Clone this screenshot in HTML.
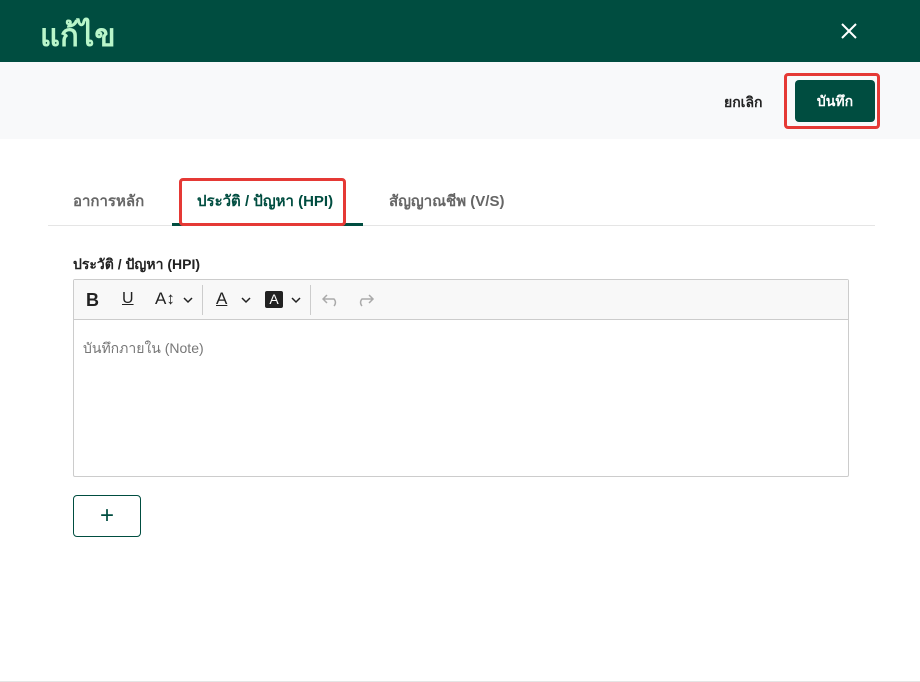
<!DOCTYPE html>
<html><head><meta charset="utf-8"><style>
*{box-sizing:border-box;margin:0;padding:0}
body{width:920px;height:682px;position:relative;background:#fff;font-family:"Liberation Sans","Noto Sans CJK SC",sans-serif;overflow:hidden}
.a{position:absolute}
</style></head><body>
<div class="a" style="left:0;top:0;width:920px;height:62px;background:#004d40"></div>
<div class="a" style="left:40px;top:13px;font-size:31px;color:#b9f6ca;font-weight:bold;font-family:'Noto Sans CJK SC',sans-serif;line-height:40px">แก้ไข</div>
<svg class="a" style="left:840px;top:22px" width="18" height="18" viewBox="0 0 18 18"><path d="M2 2L16 16M16 2L2 16" stroke="#fff" stroke-width="2"/></svg>
<div class="a" style="left:0;top:62px;width:920px;height:77px;background:#f8f9fa"></div>
<div class="a" style="left:724px;top:92px;font-size:14px;color:#222;font-weight:bold">ยกเลิก</div>
<div class="a" style="left:784px;top:73px;width:96px;height:56px;border:3px solid #e53935;border-radius:4px"></div>
<div class="a" style="left:795px;top:80px;width:80px;height:42px;background:#004d40;border-radius:4px;color:#fff;font-size:14px;font-weight:bold;text-align:center;line-height:42px">บันทึก</div>
<div class="a" style="left:73px;top:189px;font-size:15px;color:#666;font-weight:bold">อาการหลัก</div>
<div class="a" style="left:197px;top:189px;font-size:15px;color:#004d40;font-weight:bold">ประวัติ / ปัญหา (HPI)</div>
<div class="a" style="left:389px;top:189px;font-size:15px;color:#666;font-weight:bold">สัญญาณชีพ (V/S)</div>
<div class="a" style="left:48px;top:225px;width:827px;height:1px;background:#e5e5e5"></div>
<div class="a" style="left:172px;top:223px;width:191px;height:3px;background:#004d40"></div>
<div class="a" style="left:179px;top:178px;width:167px;height:48px;border:3px solid #e53935;border-radius:4px"></div>
<div class="a" style="left:73px;top:254px;font-size:14px;color:#222;font-weight:bold">ประวัติ / ปัญหา (HPI)</div>
<div class="a" style="left:73px;top:279px;width:776px;height:198px;border:1px solid #ccc;border-radius:2px"></div>
<div class="a" style="left:74px;top:280px;width:774px;height:40px;background:#f8f8f8;border-bottom:1px solid #ccc"></div>
<div class="a" style="left:86px;top:290px;font-size:18px;font-weight:bold;color:#222">B</div>
<div class="a" style="left:122px;top:290px;font-size:16px;color:#222;text-decoration:underline">U</div>
<div class="a" style="left:155px;top:289px;font-size:17px;color:#222">A↕</div>
<svg class="a" style="left:183px;top:296px" width="10" height="8" viewBox="0 0 10 8"><path d="M1 2L5 6L9 2" fill="none" stroke="#222" stroke-width="1.5"/></svg>
<div class="a" style="left:202px;top:285px;width:1px;height:30px;background:#ccc"></div>
<div class="a" style="left:216px;top:289px;font-size:17px;color:#222;text-decoration:underline">A</div>
<svg class="a" style="left:241px;top:296px" width="10" height="8" viewBox="0 0 10 8"><path d="M1 2L5 6L9 2" fill="none" stroke="#222" stroke-width="1.5"/></svg>
<div class="a" style="left:265px;top:291px;width:18px;height:17px;background:#222;color:#fff;font-size:14px;text-align:center;line-height:17px;border-radius:2px">A</div>
<svg class="a" style="left:291px;top:296px" width="10" height="8" viewBox="0 0 10 8"><path d="M1 2L5 6L9 2" fill="none" stroke="#222" stroke-width="1.5"/></svg>
<div class="a" style="left:310px;top:285px;width:1px;height:30px;background:#ccc"></div>
<svg class="a" style="left:322px;top:292px" width="56" height="16" viewBox="0 0 56 16"><path d="M5 3L1 7L5 11M1 7H12A5 5 0 0 1 12 14" fill="none" stroke="#aaa" stroke-width="1.5"/><path d="M51 3L55 7L51 11M55 7H44A5 5 0 0 0 44 14" fill="none" stroke="#aaa" stroke-width="1.5" transform="translate(-4,0)"/></svg>
<div class="a" style="left:83px;top:338px;font-size:14px;color:#777">บันทึกภายใน (Note)</div>
<div class="a" style="left:73px;top:495px;width:68px;height:42px;border:1px solid #004d40;border-radius:4px;text-align:center;line-height:40px;font-size:24px;color:#004d40">+</div>
<div class="a" style="left:0;top:681px;width:920px;height:1px;background:#e5e5e5"></div>
</body></html>
